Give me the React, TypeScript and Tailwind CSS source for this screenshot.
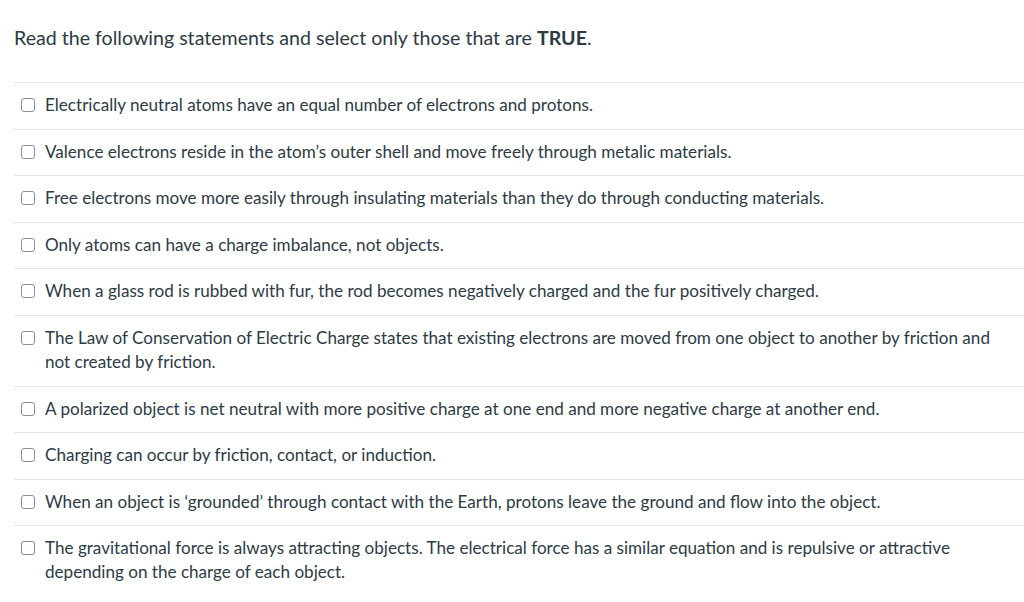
const statements = [
  "Electrically neutral atoms have an equal number of electrons and protons.",
  "Valence electrons reside in the atom\u2019s outer shell and move freely through metalic materials.",
  "Free electrons move more easily through insulating materials than they do through conducting materials.",
  "Only atoms can have a charge imbalance, not objects.",
  "When a glass rod is rubbed with fur, the rod becomes negatively charged and the fur positively charged.",
  "The Law of Conservation of Electric Charge states that existing electrons are moved from one object to another by friction and not created by friction.",
  "A polarized object is net neutral with more positive charge at one end and more negative charge at another end.",
  "Charging can occur by friction, contact, or induction.",
  "When an object is \u2018grounded\u2019 through contact with the Earth, protons leave the ground and flow into the object.",
  "The gravitational force is always attracting objects. The electrical force has a similar equation and is repulsive or attractive depending on the charge of each object.",
];

export default function App() {
  return (
    <div className="min-h-[602px] bg-white pl-[14px] text-[#2d3b45] [font-family:Lato,'Liberation_Sans',sans-serif]">
      <p className="pt-[23px] pb-[30px] text-[19.6px] leading-[29px]">
        Read the following statements and select only those that are{" "}
        <strong className="font-bold">TRUE</strong>.
      </p>
      <ul className="border-t border-[#e2e4e6]">
        {statements.map((text) => (
          <li
            key={text}
            className="flex items-start border-b border-[#e2e4e6] pt-[10px] pb-[11.6px] pr-[24px] text-[17.1px] leading-[24px] last:border-b-0"
          >
            <span className="ml-[7px] mr-[10px] mt-[5px] h-[14px] w-[14px] shrink-0 rounded-[3px] border-[1.5px] border-[#8a8f94] bg-white" />
            <span>{text}</span>
          </li>
        ))}
      </ul>
    </div>
  );
}
